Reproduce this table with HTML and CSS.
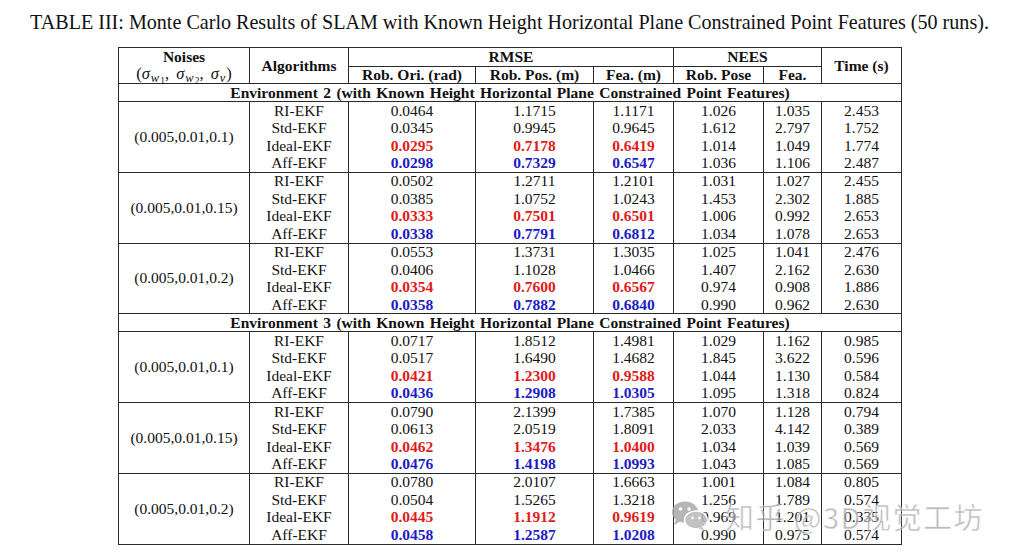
FILE: index.html
```html
<!DOCTYPE html>
<html>
<head>
<meta charset="utf-8">
<link rel="stylesheet" href="styles.css">
</head>
<body>
<div class="page">
  <div class="title">TABLE III: Monte Carlo Results of SLAM with Known Height Horizontal Plane Constrained Point Features (50 runs).</div>
  <table class="res">
    <colgroup>
      <col class="c1"><col class="c2"><col class="c3"><col class="c4"><col class="c5"><col class="c6"><col class="c7"><col class="c8">
    </colgroup>
    <thead>
      <tr class="h1">
        <th rowspan="2" class="noise"><div class="nz">Noises</div><div class="sig">(<i>σ</i><sub><i>w</i><sub>1</sub></sub>, <i>σ</i><sub><i>w</i><sub>2</sub></sub>, <i>σ</i><sub><i>v</i></sub>)</div></th>
        <th rowspan="2">Algorithms</th>
        <th colspan="3">RMSE</th>
        <th colspan="2">NEES</th>
        <th rowspan="2">Time (s)</th>
      </tr>
      <tr class="h2">
        <th>Rob. Ori. (rad)</th><th>Rob. Pos. (m)</th><th>Fea. (m)</th><th>Rob. Pose</th><th>Fea.</th>
      </tr>
    </thead>
    <tbody>
      <tr class="env"><td colspan="8">Environment 2 (with Known Height Horizontal Plane Constrained Point Features)</td></tr>
      <tr class="gs"><td rowspan="4">(0.005,0.01,0.1)</td><td>RI-EKF</td><td>0.0464</td><td>1.1715</td><td>1.1171</td><td>1.026</td><td>1.035</td><td>2.453</td></tr>
      <tr><td>Std-EKF</td><td>0.0345</td><td>0.9945</td><td>0.9645</td><td>1.612</td><td>2.797</td><td>1.752</td></tr>
      <tr><td>Ideal-EKF</td><td class="r">0.0295</td><td class="r">0.7178</td><td class="r">0.6419</td><td>1.014</td><td>1.049</td><td>1.774</td></tr>
      <tr><td>Aff-EKF</td><td class="b">0.0298</td><td class="b">0.7329</td><td class="b">0.6547</td><td>1.036</td><td>1.106</td><td>2.487</td></tr>

      <tr class="gs"><td rowspan="4">(0.005,0.01,0.15)</td><td>RI-EKF</td><td>0.0502</td><td>1.2711</td><td>1.2101</td><td>1.031</td><td>1.027</td><td>2.455</td></tr>
      <tr><td>Std-EKF</td><td>0.0385</td><td>1.0752</td><td>1.0243</td><td>1.453</td><td>2.302</td><td>1.885</td></tr>
      <tr><td>Ideal-EKF</td><td class="r">0.0333</td><td class="r">0.7501</td><td class="r">0.6501</td><td>1.006</td><td>0.992</td><td>2.653</td></tr>
      <tr><td>Aff-EKF</td><td class="b">0.0338</td><td class="b">0.7791</td><td class="b">0.6812</td><td>1.034</td><td>1.078</td><td>2.653</td></tr>

      <tr class="gs"><td rowspan="4">(0.005,0.01,0.2)</td><td>RI-EKF</td><td>0.0553</td><td>1.3731</td><td>1.3035</td><td>1.025</td><td>1.041</td><td>2.476</td></tr>
      <tr><td>Std-EKF</td><td>0.0406</td><td>1.1028</td><td>1.0466</td><td>1.407</td><td>2.162</td><td>2.630</td></tr>
      <tr><td>Ideal-EKF</td><td class="r">0.0354</td><td class="r">0.7600</td><td class="r">0.6567</td><td>0.974</td><td>0.908</td><td>1.886</td></tr>
      <tr><td>Aff-EKF</td><td class="b">0.0358</td><td class="b">0.7882</td><td class="b">0.6840</td><td>0.990</td><td>0.962</td><td>2.630</td></tr>

      <tr class="env"><td colspan="8">Environment 3 (with Known Height Horizontal Plane Constrained Point Features)</td></tr>
      <tr class="gs"><td rowspan="4">(0.005,0.01,0.1)</td><td>RI-EKF</td><td>0.0717</td><td>1.8512</td><td>1.4981</td><td>1.029</td><td>1.162</td><td>0.985</td></tr>
      <tr><td>Std-EKF</td><td>0.0517</td><td>1.6490</td><td>1.4682</td><td>1.845</td><td>3.622</td><td>0.596</td></tr>
      <tr><td>Ideal-EKF</td><td class="r">0.0421</td><td class="r">1.2300</td><td class="r">0.9588</td><td>1.044</td><td>1.130</td><td>0.584</td></tr>
      <tr><td>Aff-EKF</td><td class="b">0.0436</td><td class="b">1.2908</td><td class="b">1.0305</td><td>1.095</td><td>1.318</td><td>0.824</td></tr>

      <tr class="gs"><td rowspan="4">(0.005,0.01,0.15)</td><td>RI-EKF</td><td>0.0790</td><td>2.1399</td><td>1.7385</td><td>1.070</td><td>1.128</td><td>0.794</td></tr>
      <tr><td>Std-EKF</td><td>0.0613</td><td>2.0519</td><td>1.8091</td><td>2.033</td><td>4.142</td><td>0.389</td></tr>
      <tr><td>Ideal-EKF</td><td class="r">0.0462</td><td class="r">1.3476</td><td class="r">1.0400</td><td>1.034</td><td>1.039</td><td>0.569</td></tr>
      <tr><td>Aff-EKF</td><td class="b">0.0476</td><td class="b">1.4198</td><td class="b">1.0993</td><td>1.043</td><td>1.085</td><td>0.569</td></tr>

      <tr class="gs"><td rowspan="4">(0.005,0.01,0.2)</td><td>RI-EKF</td><td>0.0780</td><td>2.0107</td><td>1.6663</td><td>1.001</td><td>1.084</td><td>0.805</td></tr>
      <tr><td>Std-EKF</td><td>0.0504</td><td>1.5265</td><td>1.3218</td><td>1.256</td><td>1.789</td><td>0.574</td></tr>
      <tr><td>Ideal-EKF</td><td class="r">0.0445</td><td class="r">1.1912</td><td class="r">0.9619</td><td>0.969</td><td>1.201</td><td>0.335</td></tr>
      <tr><td>Aff-EKF</td><td class="b">0.0458</td><td class="b">1.2587</td><td class="b">1.0208</td><td>0.990</td><td>0.975</td><td>0.574</td></tr>
    </tbody>
  </table>
  <div class="wm">
    <svg class="wm-icon" width="40" height="32" viewBox="0 0 40 32">
      <ellipse cx="15" cy="12" rx="13" ry="10.5" fill="#a9a9a9"/>
      <path d="M6 19 L4 25 L11 21 Z" fill="#a9a9a9"/>
      <ellipse cx="26" cy="20" rx="11.5" ry="9" fill="#b8b8b8" stroke="#fff" stroke-width="1.5"/>
      <path d="M32 27 L35 31 L28 28 Z" fill="#b8b8b8"/>
      <circle cx="10.5" cy="9" r="1.7" fill="#fff"/>
      <circle cx="19" cy="9" r="1.7" fill="#fff"/>
      <circle cx="22.5" cy="18" r="1.4" fill="#fff"/>
      <circle cx="29.5" cy="18" r="1.4" fill="#fff"/>
    </svg>
    <span class="wm-text">知乎 @3D视觉工坊</span>
  </div>
</div>
</body>
</html>
```

FILE: styles.css
```css
html, body {
  margin: 0;
  padding: 0;
  background: #fff;
}
.page {
  position: relative;
  width: 1011px;
  height: 559px;
  overflow: hidden;
  font-family: "Liberation Serif", "Times New Roman", serif;
  color: #111;
}
.title {
  margin-top: 10px;
  padding-left: 8px;
  height: 24px;
  line-height: 24px;
  font-size: 20.1px;
  text-align: center;
  white-space: nowrap;
}
.res {
  margin-top: 13px;
  margin-left: 118px;
  width: 784px;
  border-collapse: collapse;
  table-layout: fixed;
  font-size: 15.5px;
  border: 1px solid #2a2a2a;
}
.c1 { width: 131px; }
.c2 { width: 99px; }
.c3 { width: 127px; }
.c4 { width: 118px; }
.c5 { width: 80px; }
.c6 { width: 90px; }
.c7 { width: 58px; }
.c8 { width: 80px; }
.res th, .res td {
  padding: 0;
  text-align: center;
  vertical-align: middle;
  white-space: nowrap;
  border-left: 1px solid #2a2a2a;
  border-right: 1px solid #2a2a2a;
  line-height: 16px;
}
.res th {
  font-weight: bold;
  border-top: 1px solid #2a2a2a;
  border-bottom: 1px solid #2a2a2a;
}
.res tr.h1 { height: 18px; }
.res tr.h2 { height: 17px; }
.nz { line-height: 17px; }
.sig {
  font-weight: normal;
  line-height: 18px;
  font-size: 16.5px;
  word-spacing: 3px;
}
.sig i { padding-right: 1px; }
.sig sub {
  font-size: 12.5px;
  vertical-align: -3px;
  line-height: 0;
}
.sig sub sub {
  font-size: 9.5px;
  font-style: normal;
  vertical-align: -2px;
}
.res tr.env { height: 18px; }
.res tr.env td {
  font-weight: bold;
  border-top: 1px solid #2a2a2a;
  border-bottom: 1px solid #2a2a2a;
  word-spacing: 1.5px;
}
.res tbody tr { height: 17.7px; }
.res tr.gs td { border-top: 1px solid #2a2a2a; }
.res td.r { color: #e01b1b; font-weight: bold; }
.res td.b { color: #1c1cc4; font-weight: bold; }
.wm {
  position: absolute;
  left: 670px;
  top: 500px;
  display: flex;
  align-items: center;
  gap: 15px;
  opacity: 0.85;
}
.wm-text {
  font-family: "Noto Sans CJK SC", "Noto Sans", sans-serif;
  font-size: 29px;
  line-height: 32px;
  color: #9c9c9c;
  letter-spacing: 1.5px;
  -webkit-text-stroke: 0.5px #fff;
  opacity: 0.8;
}
```
